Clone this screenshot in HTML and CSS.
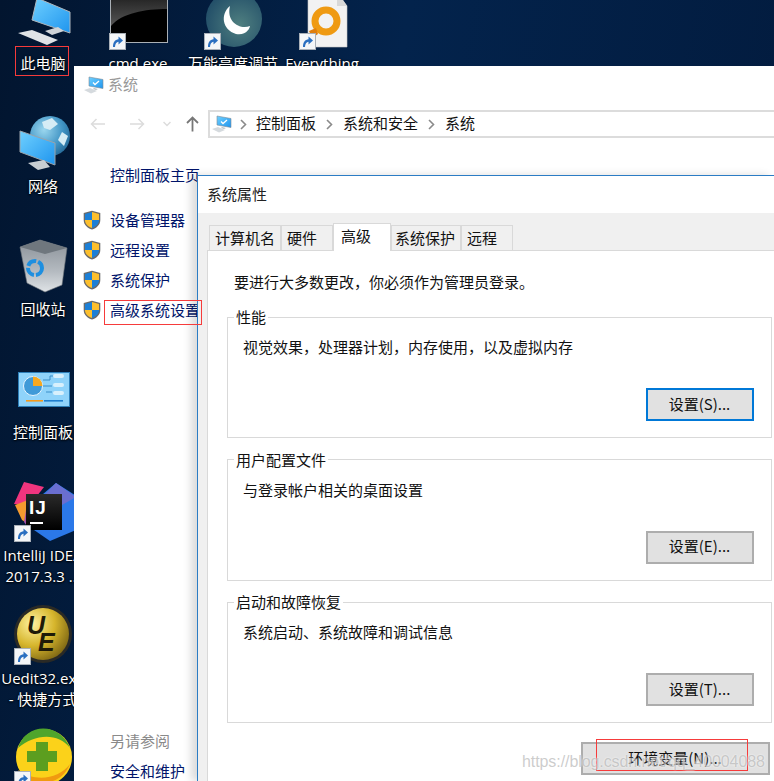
FILE: index.html
```html
<!DOCTYPE html>
<html lang="zh-CN">
<head>
<meta charset="utf-8">
<title>系统属性</title>
<link rel="stylesheet" href="styles.css">
</head>
<body>
<svg class="defs" width="0" height="0" aria-hidden="true">
  <defs>
    <linearGradient id="scr" x1="0" y1="0" x2="1" y2="1"><stop offset="0" stop-color="#6fd0ff"/><stop offset="1" stop-color="#1f95ee"/></linearGradient>
    <radialGradient id="globe" cx=".35" cy=".35" r=".8"><stop offset="0" stop-color="#9ad6ee"/><stop offset=".6" stop-color="#3f93c4"/><stop offset="1" stop-color="#1f5f8c"/></radialGradient>
    <linearGradient id="binG" x1="0" y1="0" x2="0" y2="1"><stop offset="0" stop-color="#8a9198"/><stop offset=".6" stop-color="#b4bac0"/><stop offset="1" stop-color="#dfe3e6"/></linearGradient>
    <radialGradient id="ueG" cx=".3" cy=".3" r=".85"><stop offset="0" stop-color="#fff2a0"/><stop offset=".5" stop-color="#d6b52c"/><stop offset="1" stop-color="#6f5a10"/></radialGradient>
    <linearGradient id="cmdG" x1="0" y1="0" x2="0" y2="1"><stop offset="0" stop-color="#1a1a1a"/><stop offset="1" stop-color="#555"/></linearGradient>
    <radialGradient id="moonG" cx=".6" cy=".6" r=".7"><stop offset="0" stop-color="#4f7f80"/><stop offset="1" stop-color="#1e4a66"/></radialGradient>
    <linearGradient id="blk" x1="0" y1="0" x2="0" y2="1"><stop offset="0" stop-color="#2a2a2a"/><stop offset="1" stop-color="#000"/></linearGradient>
    <symbol id="sc" viewBox="0 0 17 17">
      <rect x=".5" y=".5" width="16" height="16" fill="#f4f6f8" stroke="#a9b0b8"/>
      <path d="M4 14C4 9 6 6.500 9.500 6.200V3.500L14 7.500 9.500 11.500V8.800C7.500 9 6 11 6 14Z" fill="#2a6fc0"/>
    </symbol>
    <symbol id="shield" viewBox="0 0 18 20">
      <path d="M9 .7 17.300 3V10C17.300 15 13.500 18 9 19.600 4.500 18 .7 15 .7 10V3Z" fill="#6a6a6a"/>
      <path d="M9 2V10H2V4Z" fill="#1c7fd6"/>
      <path d="M9 2V10H16V4Z" fill="#fcbf2d"/>
      <path d="M2 10H9V18C5 16.600 2 14 2 10Z" fill="#fcbf2d"/>
      <path d="M16 10H9V18C13 16.600 16 14 16 10Z" fill="#1c7fd6"/>
    </symbol>
    <symbol id="sys" viewBox="0 0 20 18">
      <path d="M5 1 19 3.500V12.500L5 10Z" fill="url(#scr)" stroke="#7f8b96" stroke-width=".6"/>
      <path d="M9 6.500 11 8.500 15 5" fill="none" stroke="#fff" stroke-width="1.300"/>
      <path d="M0 14 6 12 13 15 7 17.500Z" fill="#d5dade"/>
      <path d="M10 12 14 13 12 14 9 13Z" fill="#b9c0c6"/>
    </symbol>
    <symbol id="chev" viewBox="0 0 7 11"><path d="M1 1 5.500 5.500 1 10" fill="none" stroke="#8a8a8a" stroke-width="1.600"/></symbol>
  </defs>
</svg>

<div class="desktop">
  <div class="dicon at-pc">
    <svg class="art" width="74" height="60" viewBox="7 -8 74 60">
      <path d="M37 -2 70 12V33L32 20Z" fill="url(#scr)" stroke="#aeb6bd"/>
      <path d="M45 31 58 27 64 31 52 35Z" fill="#cfd4d8"/>
      <path d="M18 33 32 30 58 40 47 45Z" fill="#dfe3e6"/>
    </svg>
    <span class="dlabel">此电脑</span>
  </div>
  <div class="dicon at-net">
    <svg class="art" width="74" height="60" viewBox="7 115 74 60">
      <circle cx="50" cy="136" r="20" fill="url(#globe)"/>
      <path d="M42 122 52 118 58 124 50 130 44 128ZM62 132 68 136 64 146 58 140Z" fill="#d5ecf5"/>
      <path d="M20 131 55 143V165L20 152Z" fill="url(#scr)" stroke="#9aa3aa"/>
      <path d="M28 163 44 160 50 167 38 170Z" fill="#c8ced2"/>
    </svg>
    <span class="dlabel">网络</span>
  </div>
  <div class="dicon at-bin">
    <svg class="art" width="74" height="60" viewBox="7 238 74 60">
      <path d="M20 247 40 240 67 248 62 285 45 292 27 283Z" fill="url(#binG)" stroke="#6f767c" stroke-width=".6"/>
      <path d="M20 247 40 240 67 248 45 254Z" fill="#6f777e"/>
      <circle cx="35" cy="268" r="7" fill="none" stroke="#1e8fe0" stroke-width="4" stroke-dasharray="10 2"/>
    </svg>
    <span class="dlabel">回收站</span>
  </div>
  <div class="dicon at-cp">
    <svg class="art" width="74" height="60" viewBox="7 361 74 60">
      <rect x="18.500" y="372.500" width="51" height="34" fill="#8fd3fa" stroke="#2d7fb8"/>
      <circle cx="33" cy="386" r="9.500" fill="#3f9ad8" stroke="#e6f5fe"/>
      <path d="M33 376.500A9.500 9.500 0 0 1 42.500 386H33Z" fill="#f7a81f"/>
      <path d="M43 380H50V376H60M43 386H52M46 392H52" fill="none" stroke="#3a8fca"/>
      <rect x="53" y="374" width="11" height="4" rx="2" fill="#d8f0fc"/>
      <rect x="53" y="383" width="11" height="4" rx="2" fill="#d8f0fc"/>
      <rect x="53" y="391" width="11" height="4" rx="2" fill="#d8f0fc"/>
      <rect x="26" y="400" width="17" height="1.600" fill="#f59a1c"/>
      <rect x="44" y="400" width="19" height="1.600" fill="#1f7fcf"/>
    </svg>
    <span class="dlabel">控制面板</span>
  </div>
  <div class="dicon at-ij">
    <svg class="art" width="74" height="62" viewBox="7 482 74 62">
      <path d="M24 482 44 487 30 505 14 504Z" fill="#f0357e"/>
      <path d="M15 505 28 500 30 525 22 520Z" fill="#f49a2f"/>
      <path d="M56 483 78 497 76 530 50 541 34 530 36 500Z" fill="#2b78e8"/>
      <path d="M56 483 76 497 62 505 44 495Z" fill="#6a6ed0"/>
      <path d="M26 510 36 530 30 530 24 522Z" fill="#a24ea8"/>
      <rect x="26" y="494" width="36" height="36" fill="url(#blk)"/>
      <text class="ij" x="29" y="514">IJ</text>
      <rect x="30" y="522" width="13" height="2" fill="#fff"/>
      <use href="#sc" x="14" y="525" width="17" height="17"/>
    </svg>
    <span class="dlabel">IntelliJ IDEA<br>2017.3.3 ...</span>
  </div>
  <div class="dicon at-ue">
    <svg class="art" width="74" height="63" viewBox="7 604 74 63">
      <circle cx="43" cy="634" r="29" fill="#2a2a26"/>
      <circle cx="43" cy="634" r="26" fill="url(#ueG)"/>
      <text class="ue" x="27" y="634">U<tspan dx="-7" dy="17">E</tspan></text>
      <use href="#sc" x="14" y="648" width="17" height="17"/>
    </svg>
    <span class="dlabel">Uedit32.exe<br>- 快捷方式</span>
  </div>
  <div class="dicon at-360">
    <svg class="art" width="74" height="60" viewBox="7 727 74 60">
      <circle cx="44" cy="757" r="28" fill="#fbd21a"/>
      <path d="M18 748C26 722 60 722 70 748 58 732 34 734 18 748Z" fill="#4fa52c"/>
      <path d="M18 770C26 786 60 790 70 764 58 780 34 782 18 770Z" fill="#f09a10"/>
      <path d="M36 742H48V751H57V762H48V771H36V762H27V751H36Z" fill="#5c9e1f"/>
      <use href="#sc" x="14" y="771" width="17" height="17"/>
    </svg>
  </div>

  <div class="dicon at-cmd">
    <svg class="art" width="74" height="60" viewBox="102 -8 74 60">
      <rect x="110.500" y="-8" width="57" height="50.500" fill="#000" stroke="#aab0b6"/>
      <path d="M111 -8H167V9C145 9 122 13 111 26Z" fill="url(#cmdG)"/>
      <use href="#sc" x="109" y="33" width="17" height="17"/>
    </svg>
    <span class="dlabel">cmd.exe</span>
  </div>
  <div class="dicon at-moon">
    <svg class="art" width="88" height="60" viewBox="190 -8 88 60">
      <circle cx="234" cy="19" r="28" fill="url(#moonG)"/>
      <path d="M230 6C220 14 222 30 236 34 246 36 250 28 250 26 240 30 226 22 230 6Z" fill="#fff"/>
      <use href="#sc" x="204" y="33" width="17" height="17"/>
    </svg>
    <span class="dlabel">万能亮度调节</span>
  </div>
  <div class="dicon at-ev">
    <svg class="art" width="80" height="60" viewBox="283 -8 80 60">
      <path d="M308 -8H337L347 6V47H308Z" fill="#f2f2f2" stroke="#c8c8c8" stroke-width=".6"/>
      <path d="M337 -8V6H347Z" fill="#d8d8d8"/>
      <circle cx="326" cy="21" r="11" fill="none" stroke="#ef9a12" stroke-width="7"/>
      <path d="M309 31 316 28 318 34 312 38Z" fill="#e07f0e"/>
      <use href="#sc" x="299" y="33" width="17" height="17"/>
    </svg>
    <span class="dlabel">Everything</span>
  </div>

  <section class="window">
    <header class="win-title">
      <svg width="20" height="18"><use href="#sys"/></svg>
      <span class="win-name">系统</span>
    </header>
    <nav class="win-nav">
      <div class="nav-btns">
        <svg width="16" height="12" viewBox="0 0 16 12"><path d="M15 6H1.500M6.500 1 1.500 6 6.500 11" fill="none" stroke="#dcdcdc" stroke-width="1.500"/></svg>
        <svg width="16" height="12" viewBox="0 0 16 12"><path d="M1 6H14.500M9.500 1 14.500 6 9.500 11" fill="none" stroke="#dcdcdc" stroke-width="1.500"/></svg>
        <svg width="8" height="6" viewBox="0 0 8 6"><path d="M.5 1 4 4.500 7.500 1" fill="none" stroke="#dcdcdc" stroke-width="1.500"/></svg>
        <svg width="13" height="16" viewBox="0 0 13 16"><path d="M6.500 15.500V1.500M1 7 6.500 1.500 12 7" fill="none" stroke="#777" stroke-width="1.800"/></svg>
      </div>
      <div class="address">
        <svg width="20" height="18"><use href="#sys"/></svg>
        <svg class="crumb-sep" width="7" height="11"><use href="#chev"/></svg>
        <span class="crumb">控制面板</span>
        <svg class="crumb-sep" width="7" height="11"><use href="#chev"/></svg>
        <span class="crumb">系统和安全</span>
        <svg class="crumb-sep" width="7" height="11"><use href="#chev"/></svg>
        <span class="crumb">系统</span>
      </div>
    </nav>
    <aside class="sidebar">
      <a class="side-home">控制面板主页</a>
      <ul class="side-list">
        <li><svg width="18" height="20"><use href="#shield"/></svg><a>设备管理器</a></li>
        <li><svg width="18" height="20"><use href="#shield"/></svg><a>远程设置</a></li>
        <li><svg width="18" height="20"><use href="#shield"/></svg><a>系统保护</a></li>
        <li><svg width="18" height="20"><use href="#shield"/></svg><a>高级系统设置</a></li>
      </ul>
      <div class="side-foot">
        <div class="side-foot-title">另请参阅</div>
        <a class="side-foot-link">安全和维护</a>
      </div>
    </aside>

    <section class="dialog">
      <header class="dlg-title">系统属性</header>
      <div class="tabs">
        <span class="tab">计算机名</span>
        <span class="tab tab-wide">硬件</span>
        <span class="tab tab-active">高级</span>
        <span class="tab">系统保护</span>
        <span class="tab tab-wide">远程</span>
      </div>
      <div class="pane">
        <p class="notice">要进行大多数更改，你必须作为管理员登录。</p>
        <fieldset class="group">
          <legend>性能</legend>
          <p class="desc">视觉效果，处理器计划，内存使用，以及虚拟内存</p>
          <div class="group-actions"><button class="btn btn-focus">设置(S)...</button></div>
        </fieldset>
        <fieldset class="group">
          <legend>用户配置文件</legend>
          <p class="desc">与登录帐户相关的桌面设置</p>
          <div class="group-actions"><button class="btn">设置(E)...</button></div>
        </fieldset>
        <fieldset class="group">
          <legend>启动和故障恢复</legend>
          <p class="desc">系统启动、系统故障和调试信息</p>
          <div class="group-actions"><button class="btn">设置(T)...</button></div>
        </fieldset>
        <div class="pane-actions"><button class="btn btn-env">环境变量(N)...</button></div>
      </div>
    </section>
  </section>

  <i class="mark mark-pc"></i>
  <i class="mark mark-adv"></i>
  <i class="mark mark-tab"></i>
  <i class="mark mark-env"></i>
  <span class="watermark">https://blog.csdn.net/qq_40004088</span>
</div>
</body>
</html>
```
FILE: styles.css
```css
* { box-sizing: border-box; }
html, body { margin: 0; padding: 0; }
body {
  font-family: "Noto Sans CJK SC", "Noto Sans", sans-serif;
  font-size: 15px;
  line-height: 20px;
  color: #111;
}
.defs { position: absolute; }
.desktop {
  position: relative;
  width: 774px;
  height: 781px;
  overflow: hidden;
  background: linear-gradient(100deg, #02152f 0%, #03234c 45%, #021a3c 100%);
}

/* desktop icons: free canvas */
.dicon {
  position: absolute;
  display: flex;
  flex-direction: column;
  align-items: center;
  color: #fff;
}
.art { display: block; flex: none; }
.dlabel {
  display: block;
  margin: 1px -6px 0 -8px;
  font-family: "Open Sans", "Noto Sans CJK SC", sans-serif;
  line-height: 21px;
  text-align: center;
  white-space: nowrap;
  text-shadow: 0 1px 2px #000, 0 0 2px #000;
}
.at-pc   { left: 7px; top: -8px; width: 74px; }
.at-net  { left: 7px; top: 115px; width: 74px; }
.at-bin  { left: 7px; top: 238px; width: 74px; }
.at-cp   { left: 7px; top: 361px; width: 74px; }
.at-ij   { left: 7px; top: 482px; width: 74px; }
.at-ue   { left: 7px; top: 604px; width: 74px; }
.at-360  { left: 7px; top: 727px; width: 74px; }
.at-cmd  { left: 102px; top: -8px; width: 74px; }
.at-moon { left: 190px; top: -8px; width: 88px; }
.at-ev   { left: 283px; top: -8px; width: 80px; }
.ij { font: 700 19px "Liberation Sans", sans-serif; fill: #fff; letter-spacing: 1px; }
.ue { font: italic 700 25px "Liberation Sans", sans-serif; fill: #1e1a08; }

/* system window */
.window {
  position: absolute;
  left: 74px;
  top: 66px;
  width: 700px;
  height: 715px;
  background: #fff;
  display: flex;
  flex-direction: column;
  overflow: hidden;
}
.win-title {
  flex: none;
  height: 44px;
  display: flex;
  align-items: center;
  gap: 4px;
  padding: 0 0 6px 10px;
  color: #999;
}
.win-name { margin-top: -2px; }
.win-nav {
  flex: none;
  height: 28px;
  display: flex;
  align-items: center;
}
.nav-btns {
  width: 134px;
  padding-left: 16px;
  display: flex;
  align-items: center;
}
.nav-btns svg:nth-child(2) { margin-left: 23px; }
.nav-btns svg:nth-child(3) { margin-left: 18px; }
.nav-btns svg:nth-child(4) { margin-left: 15px; }
.address {
  flex: 1;
  height: 28px;
  border: 2px solid #dcdcdc;
  border-right: 0;
  display: flex;
  align-items: center;
  padding-left: 2px;
  color: #111;
}
.crumb { margin-top: -2px; }
.crumb-sep { margin: 0 10px 0 10px; }
.address .crumb-sep:nth-child(2) { margin-left: 8px; margin-right: 9px; }

.sidebar {
  flex: 1;
  min-height: 0;
  display: flex;
  flex-direction: column;
  padding: 27px 0 0 9px;
  color: #00146a;
}
.side-home { padding-left: 27px; }
.side-list { list-style: none; margin: 20px 0 0; padding: 0; }
.side-list li {
  height: 30px;
  display: flex;
  align-items: center;
  gap: 9px;
  white-space: nowrap;
}
.side-foot { margin: auto 0 -5px 27px; }
.side-foot-title { height: 30px; line-height: 30px; color: #8a8a8a; }
.side-foot-link { display: block; height: 30px; line-height: 30px; }

/* dialog */
.dialog {
  position: absolute;
  left: 123px;
  top: 109px;
  right: 0;
  bottom: 0;
  background: #f0f0f0;
  border-left: 1px solid #2b7cc4;
  border-top: 1px solid #2b7cc4;
  box-shadow: -6px 0 8px rgba(0, 0, 0, .14);
  display: flex;
  flex-direction: column;
}
.dlg-title {
  flex: none;
  height: 37px;
  line-height: 35px;
  background: #fff;
  padding-left: 9px;
  color: #222;
}
.tabs {
  flex: none;
  height: 37px;
  padding: 10px 0 0 11px;
  display: flex;
  align-items: flex-end;
  position: relative;
}
.tab {
  height: 25px;
  line-height: 23px;
  padding: 0 5px;
  border: 1px solid #d9d9d9;
  border-bottom: 0;
  background: #f0f0f0;
  white-space: nowrap;
}
.tab-wide { padding-right: 15px; }
.tab-active {
  position: relative;
  height: 28px;
  margin-bottom: -1px;
  padding: 0 19px 0 7px;
  line-height: 23px;
  background: #fff;
  z-index: 1;
}
.tab-active + .tab { padding-left: 3px; }
.pane {
  flex: 1;
  min-height: 0;
  margin-left: 9px;
  padding: 21px 2px 0 19px;
  background: #fff;
  border: 1px solid #d9d9d9;
  border-right: 0;
  border-bottom: 0;
}
.notice { margin: 0 0 15px 7px; }
.group {
  margin: 0 0 11.5px;
  padding: 0 17px 16px 15px;
  height: 131px;
  border: 1px solid #d9d9d9;
  min-width: 0;
}
.group legend {
  margin-left: -9px;
  padding: 0 2px;
  line-height: 20px;
}
.desc { margin: 10px 0 31px; }
.group-actions { display: flex; justify-content: flex-end; }
.btn {
  width: 108px;
  height: 33px;
  padding: 0 1px 2px 0;
  font: inherit;
  color: #111;
  background: #e1e1e1;
  border: 2px solid #adadad;
}
.btn-focus { border-color: #0078d7; }
.pane-actions { display: flex; justify-content: flex-end; margin-top: 19px; padding-right: 2px; }
.btn-env { width: 189px; }

/* annotations over the screenshot */
.mark { position: absolute; border: 1px solid #f63b3b; pointer-events: none; }
.mark-pc  { left: 15px; top: 46px; width: 54px; height: 30px; }
.mark-adv { left: 104px; top: 300px; width: 98px; height: 25px; }
.mark-tab { left: 338px; top: 223px; width: 41px; height: 26px; }
.mark-env { left: 596px; top: 739px; width: 152px; height: 32px; }
.watermark {
  position: absolute;
  left: 522px;
  top: 752px;
  font: 16px/20px "Liberation Sans", sans-serif;
  letter-spacing: -.08px;
  color: rgba(170, 170, 170, .6);
  text-shadow: 0 0 2px rgba(255, 255, 255, .9);
  white-space: nowrap;
}
```
